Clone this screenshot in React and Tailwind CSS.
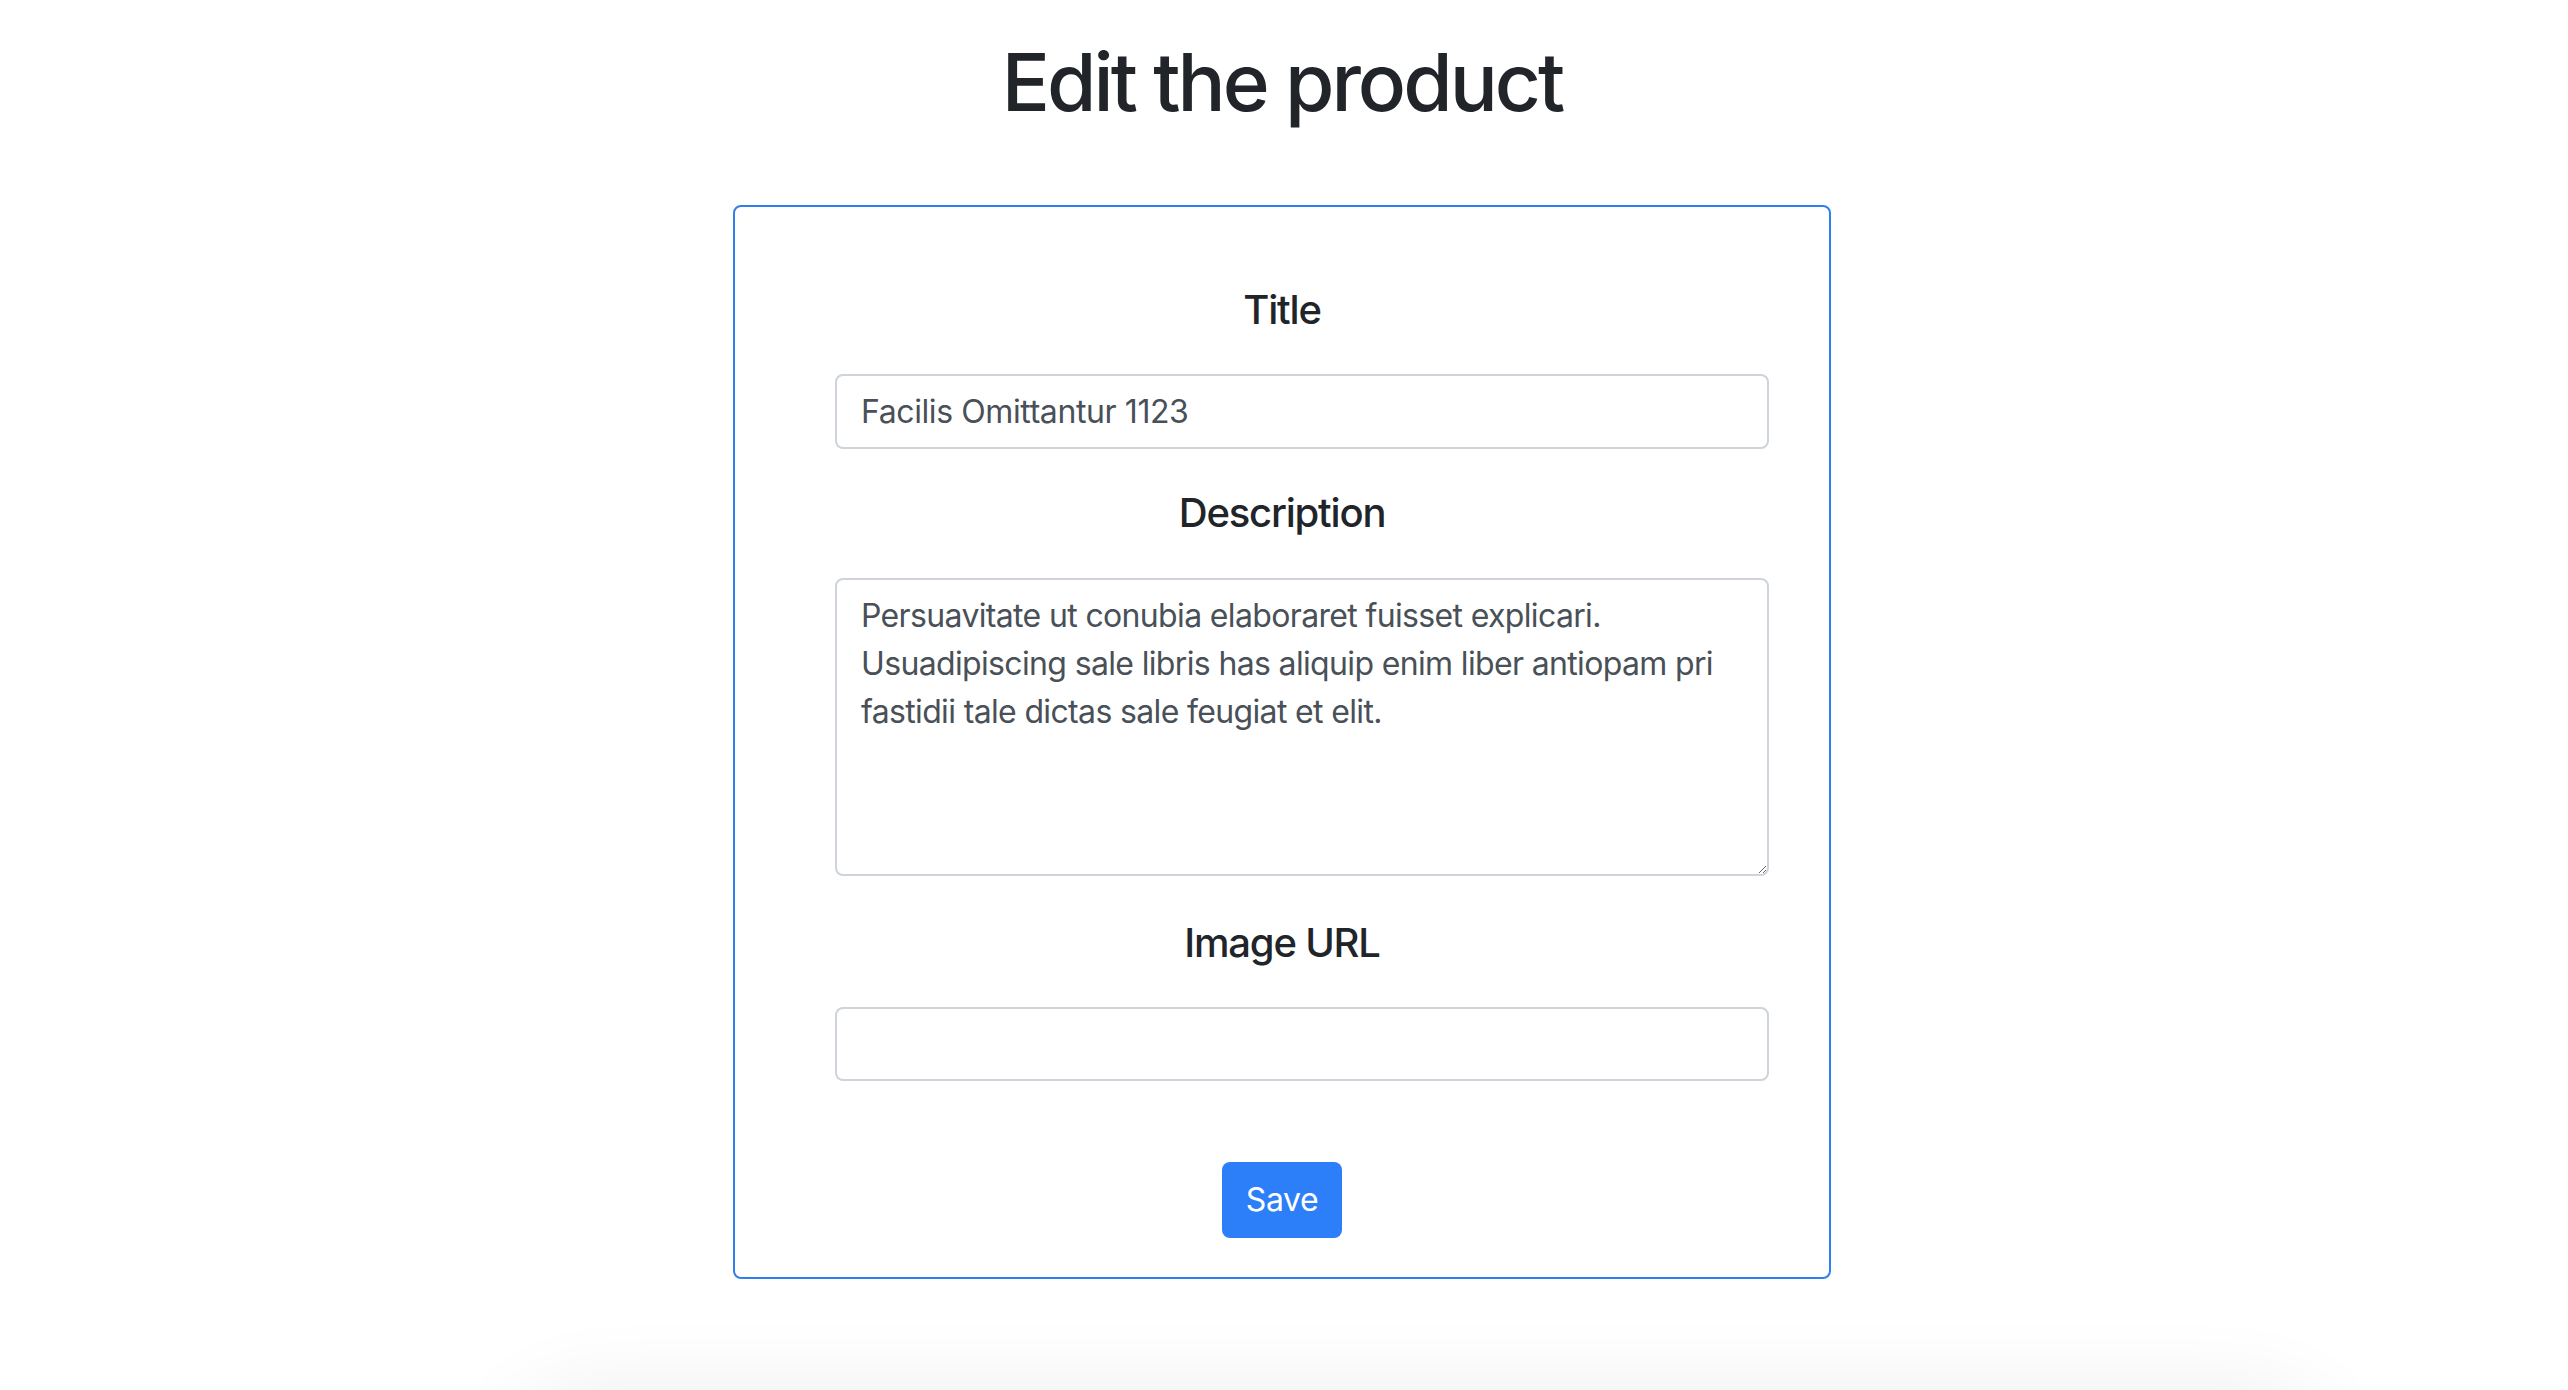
import React from "react";

const product = {
  title: "Facilis Omittantur 1123",
  description:
    "Persuavitate ut conubia elaboraret fuisset explicari. Usuadipiscing sale libris has aliquip enim liber antiopam pri fastidii tale dictas sale feugiat et elit.",
  imageUrl: "",
};

const labelClassName = "block text-center text-[40px] leading-[48px] font-medium tracking-[-1.2px] text-[#212529]";
const fieldClassName =
  "ml-[100px] block w-[934px] rounded-[8px] border-2 border-[#ced4da] bg-white px-[24px] text-[32px] text-[#495057] outline-none";

export default function App() {
  const [formData, setFormData] = React.useState(product);

  function handleChange(event) {
    const { name, value } = event.target;
    setFormData((current) => ({ ...current, [name]: value }));
  }

  function handleSubmit(event) {
    event.preventDefault();
  }

  return (
    <div className="relative h-[1390px] overflow-hidden bg-white font-['Inter',sans-serif]">
      <div className="flex flex-col items-center pr-[4px]">
        <h1 className="mt-[34px] text-[80px] leading-[96px] font-medium tracking-[-3px] text-[#212529]">Edit the product</h1>
        <form
          className="mt-[75px] w-[1098px] rounded-[8px] border-2 border-[#2f80ed] pt-[79px] pb-[39px]"
          onSubmit={handleSubmit}
        >
          <label className={labelClassName}>Title</label>
          <input
            className={`${fieldClassName} mt-[40px] h-[75px] tracking-[-0.4px]`}
            name="title"
            value={formData.title}
            onChange={handleChange}
          />
          <label className={`${labelClassName} mt-[40px]`}>Description</label>
          <textarea
            className={`${fieldClassName} mt-[41px] h-[298px] py-[12px] leading-[48px] tracking-[-0.65px]`}
            name="description"
            value={formData.description}
            onChange={handleChange}
          />
          <label className={`${labelClassName} mt-[43px]`}>Image URL</label>
          <input
            className={`${fieldClassName} mt-[40px] h-[74px]`}
            name="imageUrl"
            value={formData.imageUrl}
            onChange={handleChange}
          />
          <div className="mt-[81px] flex justify-center">
            <button
              type="submit"
              className="h-[76px] rounded-[8px] bg-[#2d7ff9] px-[24px] text-[32px] tracking-[-0.4px] text-white"
            >
              Save
            </button>
          </div>
        </form>
      </div>
      <div className="ml-[520px] mt-[121px] h-[200px] w-[1800px] rounded-[60px] bg-white shadow-[0_0_90px_rgba(0,0,0,0.09)]" />
    </div>
  );
}
